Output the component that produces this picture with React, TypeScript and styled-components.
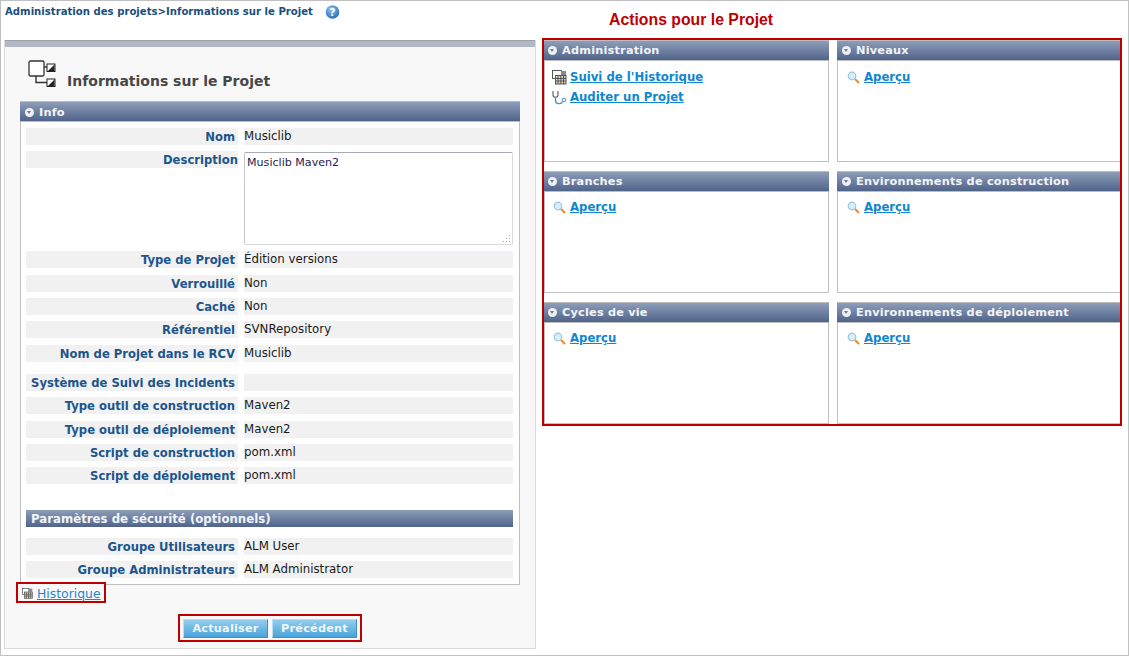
import React from "react";
import styled, { createGlobalStyle } from "styled-components";

const Global = createGlobalStyle`
  html, body { margin: 0; padding: 0; background: #fff; }
  * { box-sizing: border-box; }
`;
const font = `"DejaVu Sans", Verdana, sans-serif`;
const gradient = `linear-gradient(#8d9db9, #50648a)`;

const Page = styled.div`
  width: 1129px; height: 656px; border: 1px solid #c0c0c0;
  display: flex; padding-left: 3px; font-family: ${font}; overflow: hidden; background: #fff;
`;
const LeftCol = styled.div`width: 532px; flex: none; display: flex; flex-direction: column;`;
const Crumbs = styled.div`
  height: 39px; padding: 4px 0 0 1px; display: flex; align-items: flex-start;
  font-size: 10.15px; font-weight: bold; color: #1b4f80; line-height: 14px; white-space: nowrap;
`;
const Help = styled.svg`width: 15px; height: 16px; margin: -1px 0 0 12px; flex: none;`;
const Panel = styled.section`
  height: 609px; background: #f8f8f8; border: 1px solid #dcdcdc; border-top: 0;
  padding: 0 15px;
`;
const PanelBar = styled.div`height: 7px; margin: 0 -15px; background: #b1b7c3; border-top: 1px solid #9aa0ac;`;
const TitleRow = styled.div`height: 54px; display: flex; padding: 13px 0 0 8px;`;
const PageIcon = styled.svg`width: 30px; height: 30px; flex: none;`;
const PageTitle = styled.h1`
  margin: 12px 0 0 9px; font-size: 14px; line-height: 18px; font-weight: bold; color: #474747; white-space: nowrap;
`;
const Header = styled.div`
  height: 21px; margin: 0 -1px; background: ${gradient}; border: 1px solid #bdbdbd; border-width: 1px 0 1px 0;
  display: flex; align-items: center; padding-left: 3px; gap: 5px;
  font-size: 11.3px; font-weight: bold; color: #f2f4f8; white-space: nowrap; letter-spacing: .2px;
`;
const InfoBox = styled.div`
  width: 500px; height: 484px; background: #fff; border: 1px solid #c0c0c0; border-top: 0;
  & > ${Header} { padding-left: 4px; padding-top: 1px; }
`;
const Chevron = styled.span`
  width: 9px; height: 9px; border-radius: 50%; background: #eef0f4; flex: none; position: relative;
  margin-left: 1px;
  &::after { content: ""; position: absolute; left: 2px; top: 3px; border: 2.5px solid transparent; border-top: 3px solid #6d7b94; border-bottom: 0; }
`;
const InfoBody = styled.div`padding: 6px 5px 0 5px;`;
const Row = styled.div<{ $top?: number }>`
  display: grid; grid-template-columns: 212px 269px; column-gap: 6px; margin-top: ${(p) => p.$top ?? 6}px;
  &:first-child { margin-top: 0; }
`;
const Label = styled.div<{ $flush?: boolean }>`
  height: 17px; background: #f1f1f1; text-align: right; padding-right: ${(p) => (p.$flush ? 0 : 3)}px;
  font-size: 11.6px; line-height: 18px; font-weight: bold; color: #1b558c; white-space: nowrap;
`;
const Value = styled.div`
  height: 17px; background: #f1f1f1; font-size: 11.8px; line-height: 16px; color: #1a1a1a; white-space: nowrap;
`;
const TextBox = styled.div`
  height: 93px; margin-top: 1px; background: #fff; border: 1px solid #d8dae2; border-top-color: #a9abb3; border-left-color: #c5c7cf; border-radius: 2px;
  font-size: 11.1px; line-height: 14px; padding: 3px 2px; color: #2a1a50; position: relative;
`;
const Grip = styled.svg`position: absolute; right: 1px; bottom: 1px; width: 9px; height: 9px;`;
const SubHead = styled.div`
  height: 17px; margin: 26px 1px 0 0; background: ${gradient}; padding-left: 5px;
  font-size: 11.75px; line-height: 18px; font-weight: bold; color: #f2f4f8; white-space: nowrap;
`;
const HistoryBox = styled.div`
  width: 90px; height: 21px; margin: -3px 0 0 -4px; border: 2px solid #c00000; display: flex; align-items: center; padding: 1px 0 0 4px; gap: 4px;
  position: relative; background: #f8f8f8;
`;
const PlainLink = styled.a`
  font-size: 12.4px; color: #1f87cc; text-decoration: underline; white-space: nowrap;
`;
const Actions = styled.div`
  width: 184px; height: 28px; margin: 11px 0 0 158px; border: 2px solid #c00000;
  display: flex; gap: 4px; padding: 3px 3px;
`;
const Button = styled.button`
  width: 85px; height: 19px; padding: 0; border: 1px solid #b4e0f4; border-bottom-color: #3e8fc4; border-right-color: #3e8fc4;
  background: linear-gradient(#93cdee, #4aa3da);
  font-family: ${font}; font-size: 11.3px; font-weight: bold; color: #eef6fb; letter-spacing: .2px;
`;
const RightCol = styled.div`width: 580px; margin-left: 6px; flex: none;`;
const ActionsTitle = styled.h2`
  height: 37px; margin: 0; padding: 10px 0 0 67px; font-family: "Liberation Sans", Arial, sans-serif;
  font-size: 15.8px; line-height: 18px; font-weight: bold; color: #c00000; white-space: nowrap;
`;
const RedBox = styled.div`
  width: 580px; height: 388px; border: 2px solid #c00000; display: grid;
  grid-template-columns: 285px 283px; grid-template-rows: repeat(3, 122px); column-gap: 8px; row-gap: 9px; overflow: hidden;
`;
const CardBody = styled.div`padding: 8px 0 0 7px; display: flex; flex-direction: column; gap: 6px;`;
const Card = styled.div`
  border: 1px solid #c0c0c0; border-top: 0; background: #fff;
  &:nth-child(even) { border-right: 0; }
  &:nth-child(even) > ${Header} { padding-left: 4px; }
  &:nth-child(even) > ${CardBody} { padding-left: 8px; }
  &:nth-child(-n+2) > ${CardBody} { padding-top: 9px; }
`;
const ActionRow = styled.div<{ $tool?: boolean }>`
  display: flex; align-items: center; height: 14px; gap: ${(p) => (p.$tool ? 3 : 4)}px; padding-left: ${(p) => (p.$tool ? 0 : 1)}px;
`;
const ActionLink = styled.a`
  font-size: 11.7px; font-weight: bold; color: #0e86d0; text-decoration: underline; white-space: nowrap; line-height: 14px;
`;

const Magnifier = () => (
  <svg width="13" height="13" viewBox="0 0 13 13">
    <circle cx="5" cy="5" r="3.8" fill="#d8eefa" stroke="#9cc4dd" strokeWidth="1.2" />
    <path d="M8 8l4 4" stroke="#ee8a24" strokeWidth="2" />
  </svg>
);
const Ledger = ({ size = 15 }: { size?: number }) => (
  <svg width={size} height={size} viewBox="0 0 15 15" style={{ flex: "none" }}>
    <rect x="0.5" y="0.5" width="9" height="8" fill="#fff" stroke="#555" />
    <rect x="9" y="1" width="5" height="4" fill="#888" />
    <rect x="3.500" y="5.500" width="10.500" height="8.500" fill="#d9d3bd" stroke="#555" />
    <path d="M6 6v8M8.800 6v8M11.500 6v8M4 8.500h10M4 11h10" stroke="#4a4a4a" strokeWidth=".9" />
  </svg>
);
const Stethoscope = () => (
  <svg width="15" height="15" viewBox="0 0 15 15" style={{ flex: "none" }}>
    <path d="M1 1v4c0 3 5 3 5 0V1" fill="none" stroke="#666" strokeWidth="1.200" />
    <path d="M3.500 7.500v3c0 4 6 4 7 1" fill="none" stroke="#4a90d0" strokeWidth="1.300" />
    <circle cx="12" cy="10" r="1.800" fill="#fff" stroke="#4a90d0" />
  </svg>
);

const fields: [string, string, number][] = [
  ["Type de Projet", "Édition versions", 6],
  ["Verrouillé", "Non", 7],
  ["Caché", "Non", 6],
  ["Référentiel", "SVNRepository", 6],
  ["Nom de Projet dans le RCV", "Musiclib", 7],
  ["Système de Suivi des Incidents", "", 12],
  ["Type outil de construction", "Maven2", 6],
  ["Type outil de déploiement", "Maven2", 7],
  ["Script de construction", "pom.xml", 6],
  ["Script de déploiement", "pom.xml", 6],
];
const cards = ["Niveaux", "Branches", "Environnements de construction", "Cycles de vie", "Environnements de déploiement"];

export default function App() {
  return (
    <Page>
      <Global />
      <LeftCol>
        <Crumbs>
          Administration des projets&gt;Informations sur le Projet
          <Help viewBox="0 0 15 16">
            <defs>
              <radialGradient id="h" cx="40%" cy="30%" r="75%">
                <stop offset="0" stopColor="#8ec4ee" />
                <stop offset="1" stopColor="#2468b4" />
              </radialGradient>
            </defs>
            <circle cx="7.500" cy="8" r="6.800" fill="url(#h)" />
            <text x="7.500" y="12" textAnchor="middle" fontSize="11" fontWeight="bold" fill="#fff" fontFamily="DejaVu Sans">?</text>
          </Help>
        </Crumbs>
        <Panel>
          <PanelBar />
          <TitleRow>
            <PageIcon viewBox="0 0 30 30">
              <rect x="1" y="1" width="15" height="15" rx="1.500" fill="#fff" stroke="#333" strokeWidth="1.300" />
              <path d="M16 7h3M8 16v6.500h11" fill="none" stroke="#333" strokeWidth="1.400" />
              <rect x="19" y="4" width="8" height="7.500" fill="#fff" stroke="#222" />
              <path d="M20 11l6.500-6.500V11z" fill="#222" />
              <rect x="19" y="19" width="8" height="7.500" fill="#fff" stroke="#222" />
              <path d="M20 26l6.500-6.500V26z" fill="#222" />
            </PageIcon>
            <PageTitle>Informations sur le Projet</PageTitle>
          </TitleRow>
          <InfoBox>
            <Header><Chevron />Info</Header>
            <InfoBody>
              <Row><Label>Nom</Label><Value>Musiclib</Value></Row>
              <Row>
                <Label $flush>Description</Label>
                <TextBox>
                  Musiclib Maven2
                  <Grip viewBox="0 0 9 9">
                    <path d="M7 1h1v1H7zM4 4h1v1H4zM7 4h1v1H7zM1 7h1v1H1zM4 7h1v1H4zM7 7h1v1H7z" fill="#a8a8a8" />
                  </Grip>
                </TextBox>
              </Row>
              {fields.map(([l, v, t]) => (
                <Row key={l} $top={t}>
                  <Label>{l}</Label><Value>{v}</Value>
                </Row>
              ))}
              <SubHead>Paramètres de sécurité (optionnels)</SubHead>
              <Row $top={11}><Label>Groupe Utilisateurs</Label><Value>ALM User</Value></Row>
              <Row><Label>Groupe Administrateurs</Label><Value>ALM Administrator</Value></Row>
            </InfoBody>
          </InfoBox>
          <HistoryBox>
            <Ledger size={11} />
            <PlainLink>Historique</PlainLink>
          </HistoryBox>
          <Actions>
            <Button>Actualiser</Button>
            <Button>Précédent</Button>
          </Actions>
        </Panel>
      </LeftCol>
      <RightCol>
        <ActionsTitle>Actions pour le Projet</ActionsTitle>
        <RedBox>
          <Card>
            <Header><Chevron />Administration</Header>
            <CardBody>
              <ActionRow $tool><Ledger /><ActionLink>Suivi de l'Historique</ActionLink></ActionRow>
              <ActionRow $tool><Stethoscope /><ActionLink>Auditer un Projet</ActionLink></ActionRow>
            </CardBody>
          </Card>
          {cards.map((c) => (
            <Card key={c}>
              <Header><Chevron />{c}</Header>
              <CardBody>
                <ActionRow><Magnifier /><ActionLink>Aperçu</ActionLink></ActionRow>
              </CardBody>
            </Card>
          ))}
        </RedBox>
      </RightCol>
    </Page>
  );
}
